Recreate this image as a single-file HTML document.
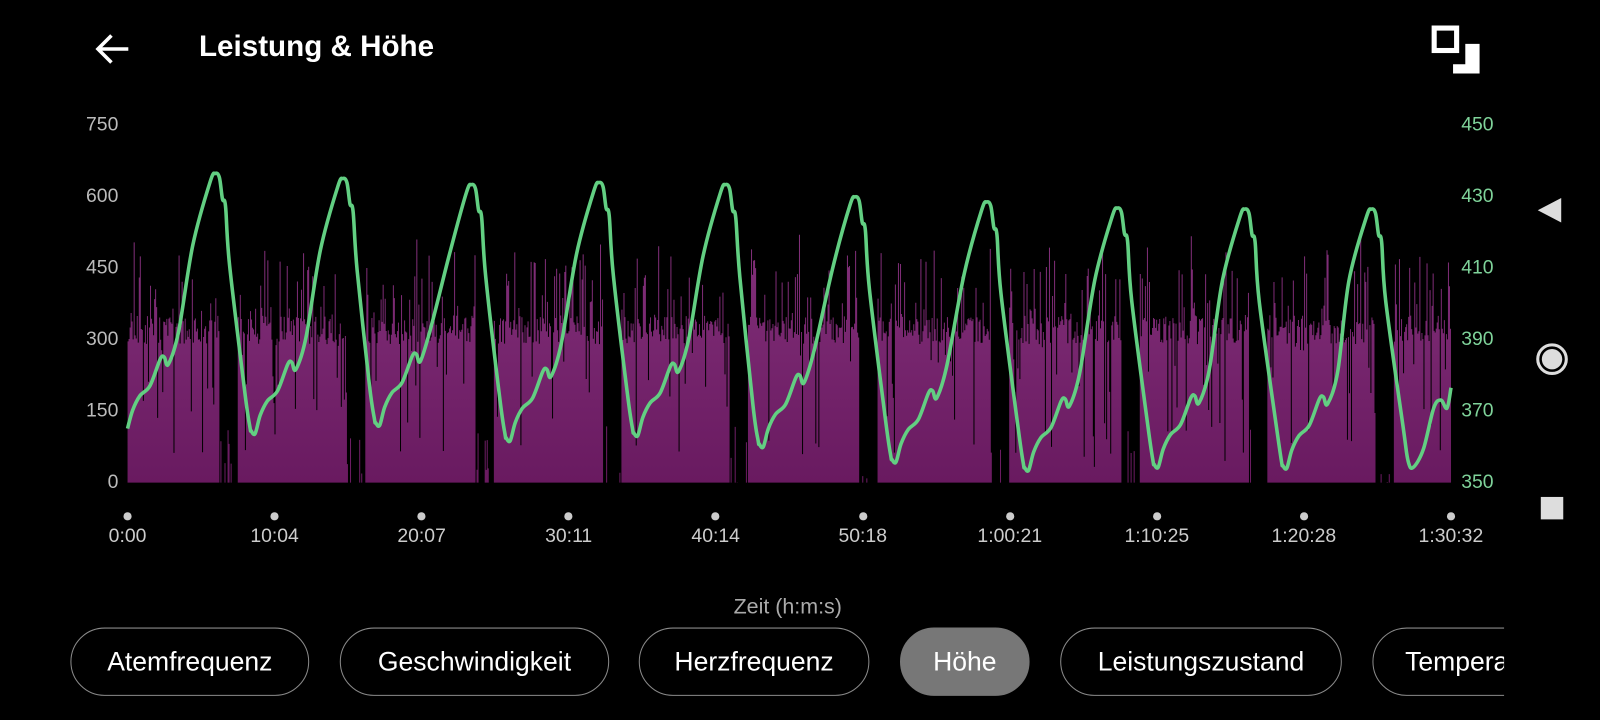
<!DOCTYPE html>
<html><head><meta charset="utf-8"><style>
html,body{margin:0;padding:0;background:#000;width:1600px;height:720px;overflow:hidden;font-family:"Liberation Sans",sans-serif;color:#fff}
#root{position:absolute;left:0;top:0;width:1568px;height:706px;transform:scale(1.0204);transform-origin:0 0}
.t{position:absolute;white-space:nowrap}
.title{left:195px;top:30px;font-size:29px;font-weight:bold;letter-spacing:0}
.yl{font-size:19px;color:#bbb;text-align:right;width:60px;left:56px}
.yr{font-size:19px;color:#7fd39a;left:1432px}
.xl{font-size:19px;color:#ccc;width:120px;text-align:center}
.dot{position:absolute;width:8px;height:8px;border-radius:50%;background:#ccc;top:502px}
.chip{position:absolute;top:615px;height:67px;border:1.5px solid #8a8a8a;border-radius:34px;box-sizing:border-box;font-size:26px;color:#fff;display:flex;align-items:center;justify-content:center}
</style></head><body><div id="root">
<svg class="t" style="left:90px;top:30px" width="40" height="36" viewBox="0 0 40 36"><path d="M34 18H7M18 6L6 18L18 30" stroke="#fff" stroke-width="3.5" fill="none" stroke-linecap="square"/></svg>
<div class="t title">Leistung &amp; Höhe</div>
<svg class="t" style="left:1400px;top:22px" width="55" height="50"><rect x="5.5" y="5.5" width="22" height="22" fill="none" stroke="#fff" stroke-width="5"/><path d="M36 21h14v29H24V41h12z" fill="#fff"/></svg>

<div class="t yl" style="top:112px">750</div>
<div class="t yl" style="top:182px">600</div>
<div class="t yl" style="top:252px">450</div>
<div class="t yl" style="top:322px">300</div>
<div class="t yl" style="top:392px">150</div>
<div class="t yl" style="top:462px">0</div>
<div class="t yr" style="top:112px">450</div>
<div class="t yr" style="top:182px">430</div>
<div class="t yr" style="top:252px">410</div>
<div class="t yr" style="top:322px">390</div>
<div class="t yr" style="top:392px">370</div>
<div class="t yr" style="top:462px">350</div>

<svg id="ch" class="t" style="left:0;top:0" width="1568" height="706"></svg>

<div id="xa"></div>
<div class="t" style="left:0;width:1568px;text-align:center;top:583px;font-size:21px;color:#aaa"><span style="position:relative;left:-12px">Zeit (h:m:s)</span></div>

<div style="position:absolute;left:0;top:0;width:1474px;height:706px;overflow:hidden">
<div class="chip" style="left:69px;width:234px">Atemfrequenz</div>
<div class="chip" style="left:333px;width:264px">Geschwindigkeit</div>
<div class="chip" style="left:626px;width:226px">Herzfrequenz</div>
<div class="chip" style="left:882px;width:127px;background:#777;border-color:#777">Höhe</div>
<div class="chip" style="left:1039px;width:276px">Leistungszustand</div>
<div class="chip" style="left:1345px;width:240px;justify-content:flex-start;padding-left:31px">Temperatur</div>
</div>

<svg class="t" style="left:1500px;top:190px" width="40" height="340">
<path d="M30 4L7 16L30 28z" fill="#ddd"/>
<circle cx="21" cy="162" r="14" fill="none" stroke="#ddd" stroke-width="3"/><circle cx="21" cy="162" r="10" fill="#ddd"/>
<rect x="10" y="297" width="22" height="22" fill="#ddd"/>
</svg>
</div>
<script>
var svg=document.getElementById('ch'),NS='http://www.w3.org/2000/svg';
var s=12345;function r(){s=(s*16807)%2147483647;return s/2147483647;}
var troughs=[[125,420],[250,425],[372,417],[500,432],[625,427],[748,438],[878,453],[1008,461],[1135,458],[1261,459],[1385,458]];
var peaks=[[211,170],[336,175],[462,181],[587,179],[711,181],[838,193],[967,198],[1095,204],[1220,205],[1344,205]];
var d='';
for(var x=125;x<=1421;x++){
  var ci=0;for(var i=0;i<peaks.length;i++){if(x>=troughs[i][0])ci=i;}
  var pk=peaks[ci][0];var rel=x-pk;
  var h;
  if(rel>3&&rel<22){h=r()<0.15?r()*120:0;}
  else{h=290+r()*60+(r()<0.3?r()*170:0)-(r()<0.15?r()*260:0);}
  if(h<=0)continue;
  var y=473-h*0.468;d+='M'+x+'.5 473V'+y.toFixed(1);
}
var g=document.createElementNS(NS,'defs');g.innerHTML='<linearGradient id="pg" gradientUnits="userSpaceOnUse" x1="0" y1="230" x2="0" y2="473"><stop offset="0" stop-color="#82307a"/><stop offset="1" stop-color="#691a60"/></linearGradient>';svg.appendChild(g);
var p=document.createElementNS(NS,'path');p.setAttribute('d',d);p.setAttribute('stroke','url(#pg)');p.setAttribute('stroke-width','1');svg.appendChild(p);
var pts=[];
for(var i=0;i<peaks.length;i++){
  var T=troughs[i],P=peaks[i],N=troughs[i+1];
  var a=T[0],ya=T[1],b=P[0],yb=P[1];
  if(i>0){pts.push([a-4,ya-3]);}
  pts.push([a,ya]);pts.push([a+5,ya-18]);pts.push([a+12,ya-32]);pts.push([a+22,ya-42]);pts.push([a+32,ya-68]);pts.push([a+36,ya-70]);pts.push([a+40,ya-63]);
  pts.push([a+50,ya-95]);pts.push([b-22,yb+70]);pts.push([b-5,yb+8]);pts.push([b,yb]);pts.push([b+4,yb+4]);pts.push([b+7,yb+25]);pts.push([b+10,yb+32]);
  pts.push([b+14,yb+90]);pts.push([N[0]-10,N[1]-40]);pts.push([N[0]-5,N[1]-6]);
}
var last=troughs[10];pts.push([last[0],last[1]]);pts.push([1395,440]);pts.push([1405,400]);pts.push([1412,392]);pts.push([1418,400]);pts.push([1422,380]);
var dd='M'+pts[0][0]+' '+pts[0][1];
for(var i=0;i<pts.length-1;i++){var p0=pts[Math.max(0,i-1)],p1=pts[i],p2=pts[i+1],p3=pts[Math.min(pts.length-1,i+2)];
dd+=' C'+(p1[0]+(p2[0]-p0[0])/6).toFixed(1)+' '+(p1[1]+(p2[1]-p0[1])/6).toFixed(1)+' '+(p2[0]-(p3[0]-p1[0])/6).toFixed(1)+' '+(p2[1]-(p3[1]-p1[1])/6).toFixed(1)+' '+p2[0]+' '+p2[1];}
var l=document.createElementNS(NS,'path');l.setAttribute('d',dd);l.setAttribute('stroke','#62cf82');l.setAttribute('stroke-width','3.5');l.setAttribute('fill','none');svg.appendChild(l);
var labs=['0:00','10:04','20:07','30:11','40:14','50:18','1:00:21','1:10:25','1:20:28','1:30:32'],h='';
for(var i=0;i<10;i++){var x=125+i*144.1;h+='<div class="dot" style="left:'+(x-4)+'px"></div><div class="t xl" style="left:'+(x-60)+'px;top:515px">'+labs[i]+'</div>';}
document.getElementById('xa').innerHTML=h;
</script>
</body></html>
